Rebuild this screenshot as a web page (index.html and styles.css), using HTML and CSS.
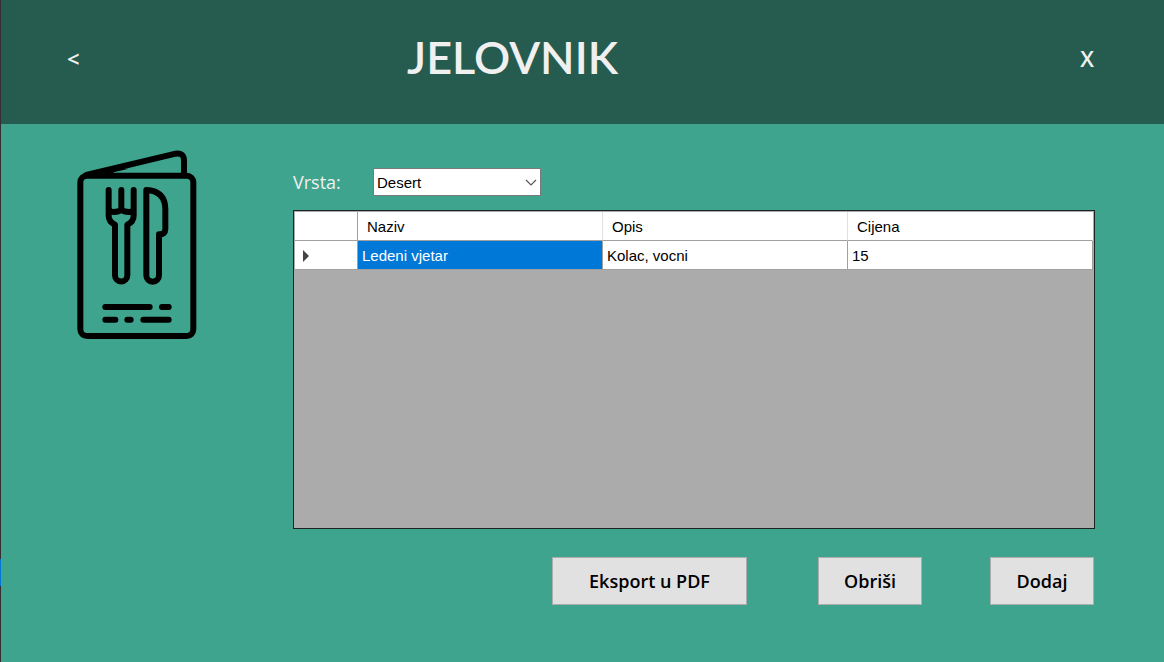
FILE: index.html
```html
<!DOCTYPE html>
<html lang="hr">
<head>
<meta charset="utf-8">
<meta name="viewport" content="width=device-width, initial-scale=1">
<title>Jelovnik</title>
<link rel="stylesheet" href="styles.css">
</head>
<body>
<div class="window">
  <header class="titlebar">
    <button class="nav-button" type="button">&lt;</button>
    <h1 class="title">JELOVNIK</h1>
    <button class="nav-button nav-close" type="button">X</button>
  </header>
  <main class="main">
    <svg class="menu-icon" viewBox="50 30 360 570" fill="none" stroke="#000" stroke-width="18" stroke-linecap="round" stroke-linejoin="round" aria-hidden="true">
      <rect x="60" y="107" width="339" height="481" rx="20"/>
      <path d="M78 105 346 41Q371 37 371 62V105"/>
      <path d="M78 105 150 88 205 86 160 97V105Z" fill="#000" stroke="none"/>
      <path d="M145 150V227Q145 245 164 254V406A18.500 18.500 0 0 0 201 406V254Q220 245 220 227V150M183 150V208M145 205Q147 216 159 216Q178 216 183 207Q188 216 207 216Q219 216 220 205"/>
      <path d="M258 150V406A19 19 0 0 0 296 406V283Q315 284 315 267V208Q315 153 258 150Z"/>
      <path d="M135 501H268M305 501H325M135 539H165M201 539H211M249 539H325"/>
    </svg>
    <section class="content">
      <div class="field">
        <label class="field-label" for="kind">Vrsta:</label>
        <div class="select-box">
          <select class="select" id="kind"><option>Desert</option></select>
          <svg class="chevron" viewBox="0 0 12 8" fill="none" stroke="#555" stroke-width="1.200" aria-hidden="true"><path d="M1 1 6 6 11 1"/></svg>
        </div>
      </div>
      <div class="grid-box">
        <table class="grid">
          <colgroup><col class="col-marker"><col><col><col></colgroup>
          <thead><tr><th></th><th>Naziv</th><th>Opis</th><th>Cijena</th></tr></thead>
          <tbody>
            <tr>
              <td class="marker"><svg class="arrow" viewBox="0 0 6 12" aria-hidden="true"><path d="M0 0 6 6 0 12Z" fill="#444"/></svg></td>
              <td class="selected">Ledeni vjetar</td><td>Kolac, vocni</td><td>15</td>
            </tr>
          </tbody>
        </table>
      </div>
      <div class="actions">
        <button class="button button-wide" type="button">Eksport u PDF</button>
        <button class="button" type="button">Obriši</button>
        <button class="button" type="button">Dodaj</button>
      </div>
    </section>
  </main>
</div>
</body>
</html>
```
FILE: styles.css
```css
* { box-sizing: border-box; }

body {
  margin: 0;
  background: linear-gradient(#332f32 559px, #0078d7 559px, #0078d7 586px, #332f32 586px);
  font-family: "Open Sans", "Noto Sans", sans-serif;
}

.window {
  display: flex;
  flex-direction: column;
  min-height: 100vh;
  margin-left: 1px;
  background: #3fa48d;
}

.titlebar {
  display: grid;
  grid-template-columns: 5fr auto 7fr;
  align-items: center;
  height: 124px;
  padding: 0 70px 8px 66px;
  background: #255c4f;
  color: #f0f0f0;
}

.title {
  margin: 0;
  padding-bottom: 2px;
  font-family: Lato, "Open Sans", sans-serif;
  font-size: 45px;
  font-weight: 600;
  line-height: 60px;
}

.nav-button {
  justify-self: start;
  padding: 0;
  border: 0;
  background: none;
  color: inherit;
  font: 600 22px/28px "Open Sans", "Noto Sans", sans-serif;
}

.nav-close { justify-self: end; }

.main {
  display: flex;
  flex: 1;
  gap: 96px;
  padding: 26px 69px 57px 76px;
}

.menu-icon {
  flex: none;
  width: 120px;
  height: 190px;
}

.content {
  display: flex;
  flex: 1;
  flex-direction: column;
  min-width: 0;
  padding-top: 18px;
}

.field {
  display: flex;
  align-items: center;
  gap: 32px;
  margin-bottom: 14px;
}

.field-label {
  width: 48px;
  color: #f0f0f0;
  font-size: 18px;
  font-weight: 400;
  line-height: 28px;
}

.select-box { position: relative; width: 168px; }

.select {
  display: block;
  width: 100%;
  height: 28px;
  padding: 0 24px 0 3px;
  appearance: none;
  border: 1px solid #7a7a7a;
  border-radius: 0;
  background: #fff;
  color: #000;
  font: 15px "Liberation Sans", Arial, sans-serif;
}

.chevron {
  position: absolute;
  top: 11px;
  right: 4px;
  width: 12px;
  height: 8px;
  pointer-events: none;
}

.grid-box {
  flex: 1;
  padding: 1px 1px 0;
  border: 1px solid #1c2422;
  background: #ababab;
}

.grid {
  width: 100%;
  table-layout: fixed;
  border-collapse: separate;
  border-spacing: 0;
  background: #fff;
  color: #000;
  font: 15px/26px "Liberation Sans", Arial, sans-serif;
}

.col-marker { width: 63px; }

.grid th,
.grid td {
  height: 29px;
  padding: 2px 4px 0;
  border-right: 1px solid #a0a0a0;
  border-bottom: 1px solid #a0a0a0;
  font-weight: 400;
  text-align: left;
}

.grid th {
  padding: 2px 9px 0;
  border-right-color: #e0e0e0;
}

.grid th:first-child { border-right-color: #a0a0a0; }

.grid th:last-child { border-right-color: #fff; }

.grid .marker { padding-left: 8px; line-height: 0; }

.arrow { width: 6px; height: 12px; }

.grid .selected { background: #0078d7; color: #fff; }

.actions {
  display: flex;
  justify-content: flex-end;
  gap: 68px;
  margin: 28px 1px 0 0;
}

.button {
  width: 104px;
  height: 48px;
  padding: 0;
  border: 1px solid #adadad;
  background: #e1e1e1;
  color: #000;
  font: 600 18px/24px "Open Sans", "Noto Sans", sans-serif;
}

.button-wide { width: 195px; margin-right: 3px; }
```
